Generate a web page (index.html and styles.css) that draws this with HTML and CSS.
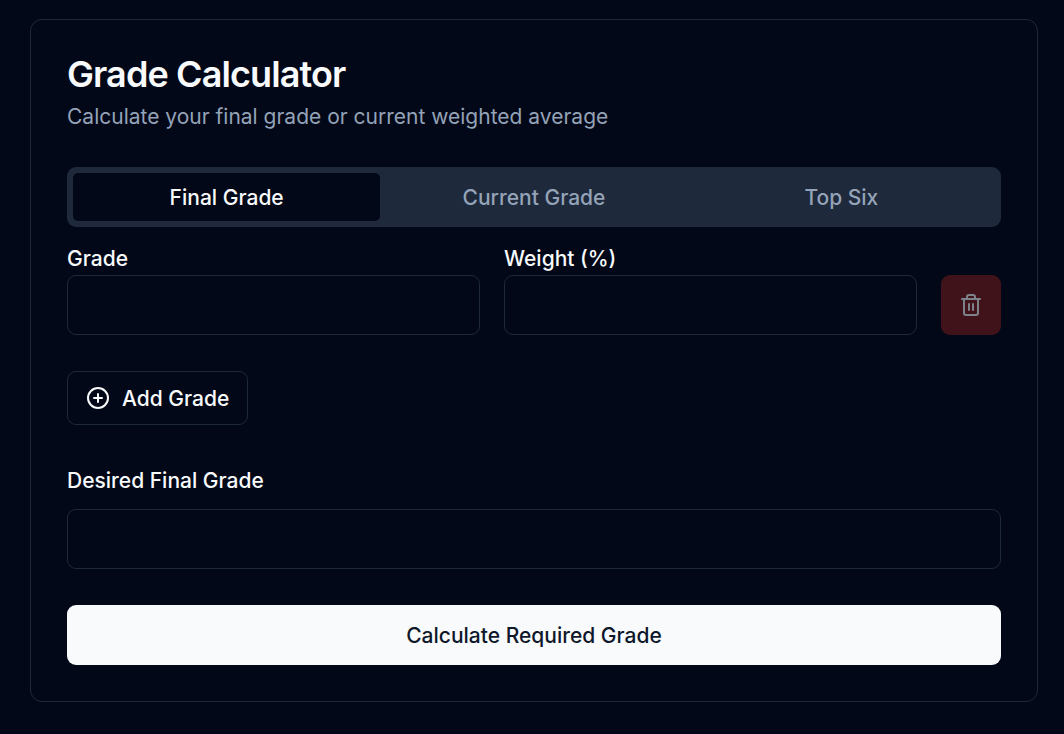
FILE: index.html
```html
<!DOCTYPE html>
<html lang="en">
<head>
    <meta charset="UTF-8">
    <meta name="viewport" content="width=device-width, initial-scale=1.0">
    <title>Grade Calculator</title>
    <link rel="stylesheet" href="styles.css">
</head>
<body>
    <main class="card">
        <header class="card-header">
            <h1>Grade Calculator</h1>
            <p>Calculate your final grade or current weighted average</p>
        </header>

        <div class="tabs" role="tablist">
            <button type="button" class="tab active" role="tab" aria-selected="true">Final Grade</button>
            <button type="button" class="tab" role="tab" aria-selected="false">Current Grade</button>
            <button type="button" class="tab" role="tab" aria-selected="false">Top Six</button>
        </div>

        <form class="form">
            <div class="grade-row">
                <div class="field">
                    <label for="grade">Grade</label>
                    <input type="text" id="grade">
                </div>
                <div class="field">
                    <label for="weight">Weight (%)</label>
                    <input type="text" id="weight">
                </div>
                <button type="button" class="btn btn-delete" aria-label="Remove grade" disabled>
                    <svg class="icon" viewBox="0 0 24 24">
                        <path d="M3 6h18"/>
                        <path d="M19 6v14c0 1-1 2-2 2H7c-1 0-2-1-2-2V6"/>
                        <path d="M8 6V4c0-1 1-2 2-2h4c1 0 2 1 2 2v2"/>
                        <path d="M10 11v6"/>
                        <path d="M14 11v6"/>
                    </svg>
                </button>
            </div>

            <button type="button" class="btn btn-add">
                <svg class="icon" viewBox="0 0 24 24">
                    <circle cx="12" cy="12" r="10"/>
                    <path d="M8 12h8"/>
                    <path d="M12 8v8"/>
                </svg>
                Add Grade
            </button>

            <div class="field desired">
                <label for="desired">Desired Final Grade</label>
                <input type="text" id="desired">
            </div>

            <button type="button" class="btn btn-primary">Calculate Required Grade</button>
        </form>
    </main>
</body>
</html>
```
FILE: styles.css
```css
* {
    box-sizing: border-box;
}
body {
    margin: 0;
    padding: 19px 26px 32px 30px;
    background-color: #020817;
    color: #f8fafc;
    font-family: Inter, sans-serif;
    font-size: 21px;
    line-height: 31px;
}
.card {
    padding: 36px;
    border: 1px solid #1e293b;
    border-radius: 12px;
}
.card-header {
    margin-bottom: 35px;
}
h1 {
    margin: 0 0 9px;
    font-size: 36px;
    font-weight: 600;
    line-height: 36px;
    letter-spacing: -0.025em;
}
.card-header p {
    margin: 0;
    color: #94a3b8;
}
button,
input {
    font: inherit;
    color: inherit;
}
button {
    cursor: pointer;
}
.tabs {
    display: grid;
    grid-template-columns: repeat(3, 1fr);
    padding: 6px;
    border-radius: 9px;
    background-color: #1e293b;
}
.tab {
    height: 48px;
    padding: 0 18px;
    border: none;
    border-radius: 5px;
    background: none;
    color: #94a3b8;
    font-weight: 500;
}
.tab.active {
    background-color: #020817;
    color: #f8fafc;
}
.form {
    margin-top: 21px;
}
.grade-row {
    display: flex;
    align-items: flex-end;
    gap: 24px;
}
.field {
    display: flex;
    flex: 1;
    flex-direction: column;
    gap: 6px;
    min-width: 0;
}
label {
    font-weight: 500;
    line-height: 21px;
}
input {
    width: 100%;
    height: 60px;
    padding: 12px 18px;
    border: 1px solid #1e293b;
    border-radius: 9px;
    background-color: #020817;
}
.btn {
    display: flex;
    align-items: center;
    justify-content: center;
    height: 60px;
    border: none;
    border-radius: 9px;
    font-weight: 500;
}
.icon {
    width: 24px;
    height: 24px;
    fill: none;
    stroke: currentColor;
    stroke-width: 2;
    stroke-linecap: round;
    stroke-linejoin: round;
}
.btn-delete {
    width: 60px;
    background-color: #7f1d1d;
    opacity: 0.5;
}
.btn-add {
    gap: 12px;
    height: 54px;
    margin-top: 36px;
    padding: 0 18px;
    border: 1px solid #1e293b;
    background-color: #020817;
}
.desired {
    gap: 18px;
    margin-top: 45px;
}
.btn-primary {
    width: 100%;
    margin-top: 36px;
    background-color: #f8fafc;
    color: #0f172a;
}
```
